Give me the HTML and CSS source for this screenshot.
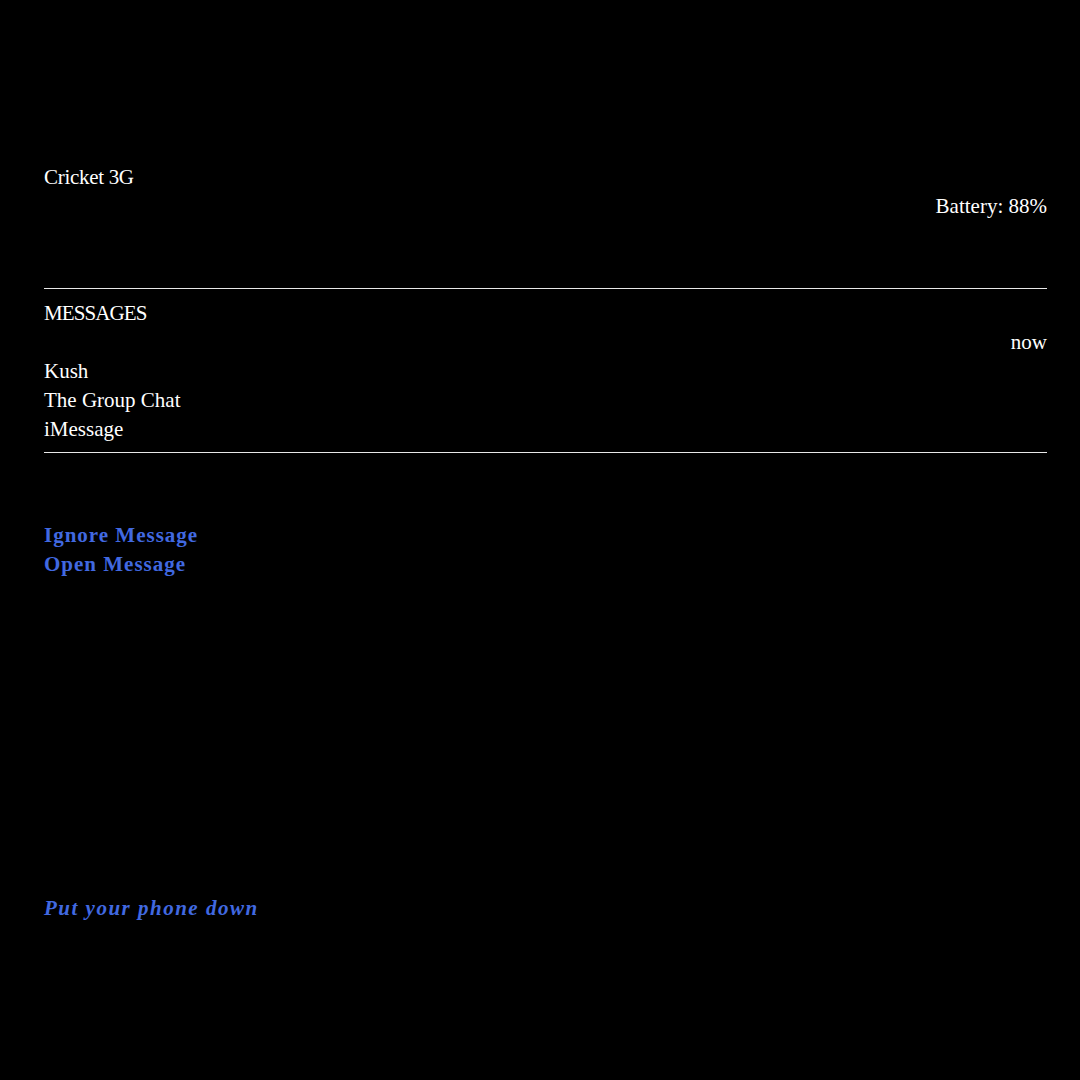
FILE: index.html
```html
<!DOCTYPE html>
<html lang="en">
<head>
<meta charset="utf-8">
<title>Lock screen</title>
<link rel="stylesheet" href="styles.css">
</head>
<body>
  <div class="status">
    <div class="carrier">Cricket 3G</div>
    <div class="battery">Battery: 88%</div>
  </div>
  <div class="divider"></div>
  <div class="notification">
    <div class="app">MESSAGES</div>
    <div class="time">now</div>
    <div class="sender">Kush</div>
    <div class="thread">The Group Chat</div>
    <div class="service">iMessage</div>
  </div>
  <div class="divider divider-bottom"></div>
  <div class="actions">
    <a class="action">Ignore Message</a>
    <a class="action">Open Message</a>
  </div>
  <div class="footer">
    <a class="hint">Put your phone down</a>
  </div>
</body>
</html>
```
FILE: styles.css
```css
html, body {
  background: #000;
}
body {
  margin: 0;
  padding: 163px 33px 0 44px;
  color: #fff;
  font-family: "Liberation Serif", "Times New Roman", serif;
  font-size: 21px;
  line-height: 29px;
}
.status {
  display: flex;
  flex-direction: column;
}
.carrier {
  letter-spacing: -0.3px;
}
.battery {
  text-align: right;
}
.divider {
  height: 1px;
  background: #e8e8e8;
  margin-top: 67px;
}
.notification {
  padding-top: 10px;
  display: flex;
  flex-direction: column;
}
.app {
  letter-spacing: -0.9px;
}
.time {
  text-align: right;
}
.divider-bottom {
  margin-top: 8px;
}
.actions {
  margin-top: 68px;
  display: flex;
  flex-direction: column;
  align-items: flex-start;
}
.action, .hint {
  color: #4169e1;
  font-weight: bold;
  letter-spacing: 1px;
}
.footer {
  margin-top: 315px;
}
.hint {
  font-style: italic;
  letter-spacing: 1.5px;
}
```
